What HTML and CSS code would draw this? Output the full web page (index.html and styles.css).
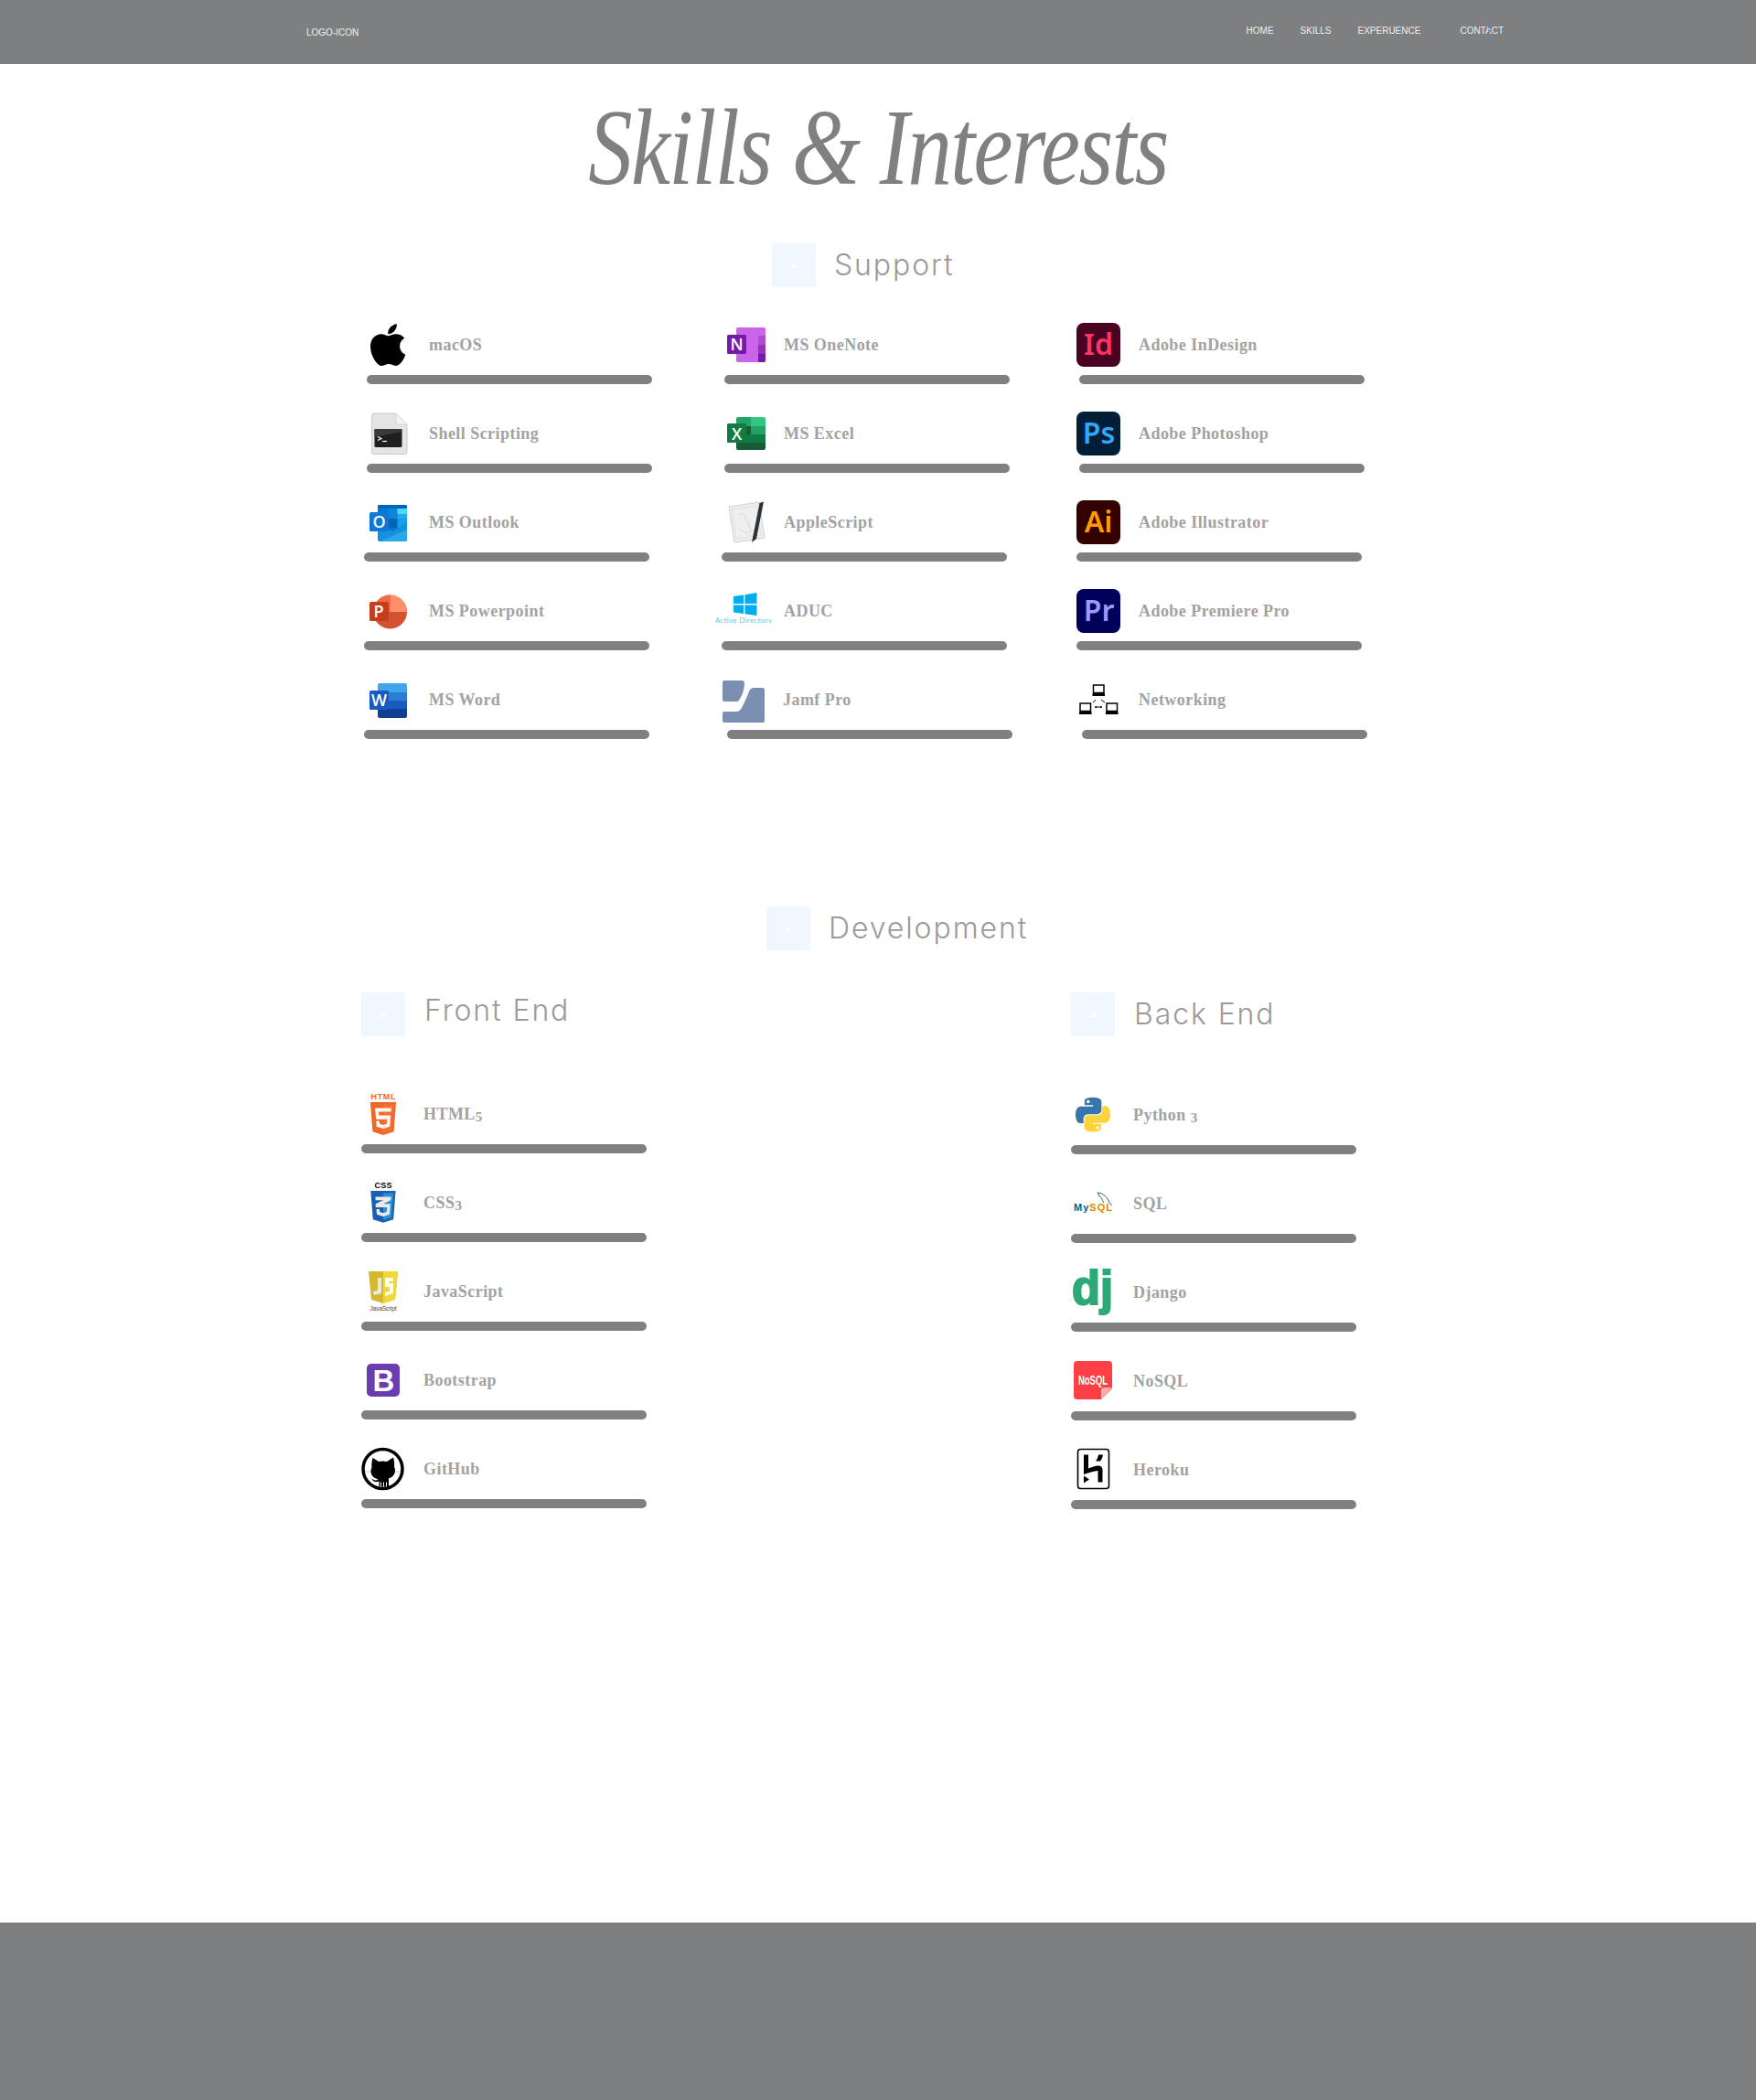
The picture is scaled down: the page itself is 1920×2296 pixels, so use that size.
FILE: index.html
```html
<!DOCTYPE html>
<html lang="en">
<head>
<meta charset="utf-8">
<title>Skills &amp; Interests</title>
<link rel="stylesheet" href="styles.css">
</head>
<body>
<nav class="topbar">
  <a class="logo">LOGO-ICON</a>
  <ul class="links">
    <li>HOME</li>
    <li>SKILLS</li>
    <li>EXPERUENCE</li>
    <li class="contact">CONTACT<span class="dots"><i></i><i></i><i></i></span></li>
  </ul>
</nav>
<main class="wrap">
  <h1 class="title">Skills &amp; Interests</h1>

  <h2 class="heading heading-support"><span class="ph"><i></i></span>Support</h2>
  <section class="support">
    <div class="col col-a">
      <div class="skill"><div class="head"><svg class="ic" viewBox="0 0 48 48"><path transform="translate(4.6 -2) scale(.102)" d="M318.7 268.7c-.2-36.7 16.4-64.4 50-84.8-18.8-26.9-47.2-41.7-84.7-44.6-35.5-2.8-74.3 20.7-88.5 20.7-15 0-49.4-19.7-76.4-19.7C63.3 141.2 4 184.8 4 273.5q0 39.3 14.4 81.2c12.8 36.7 59 126.7 107.2 125.2 25.2-.6 43-17.9 75.8-17.9 31.8 0 48.3 17.9 76.4 17.9 48.6-.7 90.4-82.5 102.6-119.3-65.2-30.7-61.7-90-61.7-91.9zm-56.6-164.2c27.3-32.4 24.8-61.9 24-72.5-24.1 1.4-52 16.4-67.9 34.9-17.5 19.8-27.8 44.3-25.6 71.9 26.1 2 49.9-11.4 69.5-34.3z"/></svg><span class="name">macOS</span></div><div class="bar in3"></div></div>

      <div class="skill"><div class="head"><svg class="ic" viewBox="0 0 48 48"><path d="M9 2h24l12 12v30a2.500 2.500 0 0 1-2.500 2.500H9A2.500 2.500 0 0 1 6.500 44V4.500A2.500 2.500 0 0 1 9 2z" fill="#e4e4e4" stroke="#c9c9c9"/><path d="M33 2v12h12z" fill="#f4f4f4" stroke="#cfcfcf" stroke-width=".7"/><rect x="9.500" y="19" width="30" height="20" rx="1.500" fill="#1f1f21"/><path d="M9.500 28 39.500 22v-3h-30z" fill="#3a3a3c"/><path d="M13 27.500l4 2-4 2" fill="none" stroke="#fff" stroke-width="1.200"/><path d="M18 32.500h5" stroke="#fff" stroke-width="1.200"/></svg><span class="name">Shell Scripting</span></div><div class="bar in3"></div></div>

      <div class="skill"><div class="head"><svg class="ic" viewBox="0 0 48 48"><rect x="13" y="5" width="32" height="30" rx="1.500" fill="#0078d4"/><path d="M15 5h28a2 2 0 0 1 2 2v2H13V7a2 2 0 0 1 2-2z" fill="#0364b8"/><rect x="24" y="9" width="10.500" height="11" fill="#0a88d8"/><rect x="34.500" y="9" width="10.500" height="11" fill="#28a8ea"/><rect x="34.500" y="9" width="10.500" height="6" fill="#50d9ff"/><rect x="24" y="20" width="10.500" height="10" fill="#0364b8"/><rect x="34.500" y="20" width="10.500" height="10" fill="#14a0e8"/><path d="M13 26l16 8 16-10v19a2 2 0 0 1-2 2H15a2 2 0 0 1-2-2z" fill="#1490df"/><path d="M15 45l30-13v11a2 2 0 0 1-2 2z" fill="#28a8ea"/><rect x="4" y="13" width="21" height="21" rx="1.500" fill="#0f78d4"/><text class="ms" x="14.500" y="30">O</text></svg><span class="name">MS Outlook</span></div><div class="bar"></div></div>

      <div class="skill"><div class="head"><svg class="ic" viewBox="0 0 48 48"><circle cx="26.500" cy="25" r="18.500" fill="#d35230"/><path d="M26.500 6.500a18.500 18.500 0 0 1 18.500 18.500H26.500z" fill="#ff8f6b"/><path d="M8 25a18.500 18.500 0 0 1 18.500-18.500V25z" fill="#ed6c47"/><rect x="4" y="14" width="21" height="21" rx="1.500" fill="#c43e1c"/><text class="ms" x="14" y="31">P</text></svg><span class="name">MS Powerpoint</span></div><div class="bar"></div></div>

      <div class="skill"><div class="head"><svg class="ic" viewBox="0 0 48 48"><path d="M15 6h28a2 2 0 0 1 2 2v9H13V8a2 2 0 0 1 2-2z" fill="#41a5ee"/><rect x="13" y="16" width="32" height="10" fill="#2b7cd3"/><rect x="13" y="25" width="32" height="10" fill="#185abd"/><path d="M13 34h32v8a2 2 0 0 1-2 2H15a2 2 0 0 1-2-2z" fill="#103f91"/><rect x="4" y="14" width="21" height="21" rx="1.500" fill="#185abd"/><text class="ms" x="14.500" y="31">W</text></svg><span class="name">MS Word</span></div><div class="bar"></div></div>
    </div>

    <div class="col col-b">
      <div class="skill"><div class="head"><svg class="ic" viewBox="0 0 48 48"><path d="M15 5h28a2 2 0 0 1 2 2v34a2 2 0 0 1-2 2H15a2 2 0 0 1-2-2V7a2 2 0 0 1 2-2z" fill="#ca64ea"/><rect x="37" y="14" width="8" height="10" fill="#ae4bd5"/><rect x="37" y="24" width="8" height="9.500" fill="#9332bf"/><path d="M37 33.500h8V41a2 2 0 0 1-2 2h-6z" fill="#7719aa"/><rect x="3" y="13" width="21" height="21" rx="1.500" fill="#7719aa"/><text class="ms" x="13.500" y="30">N</text></svg><span class="name">MS OneNote</span></div><div class="bar in3"></div></div>

      <div class="skill"><div class="head"><svg class="ic" viewBox="0 0 48 48"><path d="M15 6h16v10H13V8a2 2 0 0 1 2-2z" fill="#21a366"/><path d="M29 6h14a2 2 0 0 1 2 2v8H29z" fill="#33c481"/><rect x="13" y="16" width="16" height="9" fill="#185c37"/><rect x="29" y="16" width="16" height="9" fill="#21a366"/><rect x="13" y="25" width="16" height="9" fill="#107c41"/><rect x="29" y="25" width="16" height="9" fill="#107c41"/><path d="M13 34h32v6a2 2 0 0 1-2 2H15a2 2 0 0 1-2-2z" fill="#185c37"/><rect x="3" y="13" width="21" height="21" rx="1.500" fill="#107c41"/><text class="ms" x="13.500" y="30.500">X</text></svg><span class="name">MS Excel</span></div><div class="bar in3"></div></div>

      <div class="skill"><div class="head"><svg class="ic" viewBox="0 0 48 48"><path d="M5 7 38 2l6 39-33 5z" fill="#efefef" stroke="#d0d0d0"/><path d="M8 10 35 6l5 32-27 4z" fill="none" stroke="#dcdcdc" stroke-width=".8"/><path d="M16 16c3-3 7-1 7 2l5 12c2 4-2 7-6 5l-6-4" fill="none" stroke="#d8d8d8"/><path d="M43 1.500 38.500 3 30 46l5-4z" fill="#2d3338"/></svg><span class="name">AppleScript</span></div><div class="bar"></div></div>

      <div class="skill"><div class="head"><svg class="ic" viewBox="0 0 48 48"><path d="M10 8l11-1.500V16H10zM22.500 6.200 35.500 4V16h-13zM10 17.500h11V27L10 25.500zM22.500 17.500h13V29l-13-1.800z" fill="#00adef"/><text class="adir" x="-10" y="37" textLength="62">Active Directory</text></svg><span class="name">ADUC</span></div><div class="bar"></div></div>

      <div class="skill"><div class="head head-jamf"><svg class="ic" viewBox="0 0 48 48"><path d="M0 3H19a3 3 0 0 1 3 3c0 6-2 13-6 18.500-1 1-1 1.500-2 1.500H0a2 2 0 0 1-2-2V5a2 2 0 0 1 2-2z" fill="#7b8fb3"/><path d="M33 11H42a2 2 0 0 1 2 2V47a2 2 0 0 1-2 2H0a2 2 0 0 1-2-2V39a2 2 0 0 1 2-2H13c3 0 5-2 7-6 3-6 5-11 7-16 1-3 3-4 6-4z" fill="#7b8fb3"/></svg><span class="name">Jamf Pro</span></div><div class="bar in6"></div></div>
    </div>

    <div class="col col-c">
      <div class="skill"><div class="head"><svg class="ic" viewBox="0 0 48 48"><rect width="48" height="48" rx="8" fill="#49021f"/><text class="ad" x="24" y="35" fill="#ff3366">Id</text></svg><span class="name">Adobe InDesign</span></div><div class="bar in3"></div></div>
      <div class="skill"><div class="head"><svg class="ic" viewBox="0 0 48 48"><rect width="48" height="48" rx="8" fill="#001e36"/><text class="ad" x="24.500" y="35" fill="#31a8ff">Ps</text></svg><span class="name">Adobe Photoshop</span></div><div class="bar in3"></div></div>
      <div class="skill"><div class="head"><svg class="ic" viewBox="0 0 48 48"><rect width="48" height="48" rx="8" fill="#330000"/><text class="ad" x="24" y="35" fill="#ff9a00">Ai</text></svg><span class="name">Adobe Illustrator</span></div><div class="bar"></div></div>
      <div class="skill"><div class="head"><svg class="ic" viewBox="0 0 48 48"><rect width="48" height="48" rx="8" fill="#00005b"/><text class="ad" x="24.500" y="35" fill="#9999ff">Pr</text></svg><span class="name">Adobe Premiere Pro</span></div><div class="bar"></div></div>
      <div class="skill"><div class="head"><svg class="ic" viewBox="0 0 48 48"><rect x="18.500" y="8" width="11.500" height="8.500" fill="#fff" stroke="#000" stroke-width="1.500"/><rect x="17.500" y="17" width="13.500" height="3" fill="#000"/><rect x="4" y="28" width="11.500" height="8.500" fill="#fff" stroke="#000" stroke-width="1.500"/><rect x="3" y="37" width="13.500" height="3" fill="#000"/><rect x="33" y="28" width="11.500" height="8.500" fill="#fff" stroke="#000" stroke-width="1.500"/><rect x="32" y="37" width="13.500" height="3" fill="#000"/><path d="M18 27l3-3M27 24l4 3M20 32h8" stroke="#000" stroke-width="1" fill="none"/><path d="M20 32l2-1.300v2.600zM28 32l-2-1.300v2.600z"/></svg><span class="name">Networking</span></div><div class="bar in6"></div></div>
    </div>
  </section>

  <h2 class="heading heading-dev"><span class="ph"><i></i></span>Development</h2>

  <section class="dev">
    <div class="dev-col">
      <h3 class="subhead"><span class="ph"><i></i></span><span class="sub-front">Front End</span></h3>

      <div class="skill"><div class="head"><svg class="ic" viewBox="0 0 48 48"><text class="logo-word html-word" x="24" y="8" textLength="27">HTML</text><g transform="translate(8 11) scale(.0625 .0703)"><path d="M71 460 30 0h451l-41 460-185 52" fill="#f16529"/><path d="M256 472l149-41 35-394H256" fill="#f4702e"/><path d="M256 208h-75l-5-58h80V94H114l15 171h127zm0 147-64-17-4-45h-56l7 89 117 32z" fill="#fff"/><path d="M256 265h69l-7 73-62 17v59l115-32 16-174H256zm0-171v56h136l5-56z" fill="#f6f6f6"/></g></svg><span class="name">HTML<span class="old">5</span></span></div><div class="bar"></div></div>

      <div class="skill"><div class="head"><svg class="ic" viewBox="0 0 48 48"><text class="logo-word css-word" x="24" y="8" textLength="19">CSS</text><g transform="translate(8.500 11) scale(.0605 .068)"><path d="M71 460 30 0h451l-41 460-185 52" fill="#1b60b0"/><path d="M256 472l149-41 35-394H256" fill="#2b8fd4"/><path d="M114 94h284l-5 56-137 58h131l-15 172-115 32-116-32-8-86h56l4 44 64 17 62-17 7-73H122l-5-56 139-58H119z" fill="#ebebeb"/></g></svg><span class="name">CSS<span class="old">3</span></span></div><div class="bar"></div></div>

      <div class="skill"><div class="head"><svg class="ic" viewBox="0 0 48 48"><path d="M8 2h32l-3 31-13 4-13-4z" fill="#d4b830"/><path d="M24 2h16l-3 31-13 4z" fill="#f0d83b"/><path d="M22 9v17l-8 2-1-4 5-1V9z" fill="#e8e8e8"/><path d="M35 9H26v10h5v5l-5 1v4l9-3V15h-5v-2h5z" fill="#fff"/><text class="js-word" x="24" y="45" textLength="29">JavaScript</text></svg><span class="name">JavaScript</span></div><div class="bar"></div></div>

      <div class="skill"><div class="head"><svg class="ic" viewBox="0 0 48 48"><rect x="6" y="6" width="36" height="36" rx="5" fill="#6a3cb0"/><text class="boot" x="24.500" y="35.500">B</text></svg><span class="name">Bootstrap</span></div><div class="bar"></div></div>

      <div class="skill"><div class="head"><svg class="ic" viewBox="0 0 48 48"><circle cx="23.500" cy="24" r="21.500" fill="#fff" stroke="#000" stroke-width="3.500"/><path d="M4 27h39" stroke="#aaa" stroke-width=".6"/><path transform="translate(0 2.500)" d="M12 9l7 4.500c3-.8 6-.8 9 0L35 9c1 3 1.500 7 1 10 1 2 1.200 4 .8 6-.8 4-4 6-6.800 7v9h-2v-5h-1v5h-2v-5h-1v5h-2v-5h-1v5h-1.500v-6c-2 1-4 1-6 0l-2.500-3 3 1.500c2 1 3 .5 4.500-.5-3-1-7-3-7.800-7-.4-2-.2-4 .8-6-.5-3 0-7 1-10z"/></svg><span class="name">GitHub</span></div><div class="bar"></div></div>
    </div>

    <div class="dev-col dev-col-back">
      <h3 class="subhead"><span class="ph"><i></i></span><span class="sub-back">Back End</span></h3>

      <div class="skill"><div class="head"><svg class="ic" viewBox="0 0 48 48"><g transform="translate(5 4.500) scale(.345)"><path d="M54.900.9C26.900.9 28.600 13 28.600 13v12.600h26.700v3.800H18S0 27.300 0 55.600c0 28.300 15.700 27.300 15.700 27.300h9.400V69.700s-.5-15.700 15.500-15.700h26.600s15 .2 15-14.500V15.300S84.500.9 54.900.9zM40 9.400c2.700 0 4.800 2.200 4.800 4.800 0 2.700-2.200 4.800-4.800 4.800-2.700 0-4.800-2.200-4.800-4.800 0-2.700 2.200-4.800 4.800-4.800z" fill="#3776ab"/><path transform="rotate(180 55 55.500)" d="M54.900.9C26.900.9 28.600 13 28.600 13v12.600h26.700v3.800H18S0 27.300 0 55.600c0 28.300 15.700 27.300 15.700 27.300h9.400V69.700s-.5-15.700 15.500-15.700h26.600s15 .2 15-14.500V15.300S84.500.9 54.900.9zM40 9.400c2.700 0 4.800 2.200 4.800 4.800 0 2.700-2.200 4.800-4.800 4.800-2.700 0-4.800-2.200-4.800-4.800 0-2.700 2.200-4.800 4.800-4.800z" fill="#ffd43b"/></g></svg><span class="name">Python <span class="old">3</span></span></div><div class="bar"></div></div>

      <div class="skill"><div class="head"><svg class="ic" viewBox="0 0 48 48"><text class="my" x="3" y="32" textLength="42"><tspan class="my-a">My</tspan><tspan class="my-b">SQL</tspan></text><path d="M29 12c6 0 11 5 13 11l3 3M29 12l2 4c2 0 3 4 5 7" fill="none" stroke="#2f5d72" stroke-width="1"/></svg><span class="name">SQL</span></div><div class="bar"></div></div>

      <div class="skill"><div class="head"><svg class="ic" viewBox="0 0 48 48"><text class="dj" x="1" y="37" textLength="45" lengthAdjust="spacingAndGlyphs">dj</text></svg><span class="name">Django</span></div><div class="bar"></div></div>

      <div class="skill"><div class="head"><svg class="ic" viewBox="0 0 48 48"><path d="M7 2h34a4 4 0 0 1 4 4v26L33 44H7a4 4 0 0 1-4-4V6a4 4 0 0 1 4-4z" fill="#fb3f44"/><path d="M33 44l12-13H36a3 3 0 0 0-3 3z" fill="#fdaaaa"/><text class="nosql" x="24" y="28" textLength="32" lengthAdjust="spacingAndGlyphs">NoSQL</text></svg><span class="name">NoSQL</span></div><div class="bar"></div></div>

      <div class="skill"><div class="head"><svg class="ic" viewBox="0 0 48 48"><rect x="7.500" y="1.500" width="34" height="43" rx="3" fill="#fff" stroke="#000" stroke-width="1.600"/><path d="M14 7.500h5v15c3-1.500 8-3 11-3 3 0 4.500 1.500 4.500 4.500V37.500h-5V25c-4 .3-11 2.500-15.500 4z"/><path d="M14 30.500l6 4-6 4zM30 7.500h5c-.5 3-1.500 5-3 7h-5c1.500-2 2.500-4 3-7z"/></svg><span class="name">Heroku</span></div><div class="bar"></div></div>
    </div>
  </section>
</main>
<footer class="footer"></footer>
</body>
</html>
```
FILE: styles.css
```css
* { box-sizing: border-box; }
html, body { margin: 0; padding: 0; }
body { background: #fff; font-family: "Liberation Sans", Arial, sans-serif; }

.topbar {
  height: 70px;
  background: #7e7f81;
  display: flex;
  justify-content: space-between;
  padding: 0 276px 0 335px;
  color: #f0f0f0;
  font-size: 10px;
}
.logo { margin-top: 30px; line-height: 12px; }
.links { display: flex; list-style: none; margin: 0; padding: 0; gap: 29px; line-height: 12px; padding-top: 28px; }
.contact { position: relative; margin-left: 14px; }
.dots { position: absolute; left: 31px; top: 0; width: 3px; height: 16px; display: flex; flex-direction: column; gap: 2px; }
.dots i { display: block; width: 3px; height: 3px; border-radius: 50%; background: #2f8fe8; }
.dots i:last-child { margin-top: 4px; }

.wrap { width: 1130px; margin: 0 auto; display: block; height: 2032px; }

.title {
  margin: 0 0 0 -390px;
  width: 1910px;
  height: 196px;
  padding-top: 33px;
  text-align: center;
  font-family: "Liberation Serif", serif;
  font-style: italic;
  font-weight: 400;
  font-size: 118px;
  line-height: 118px;
  letter-spacing: -2px;
  color: #808080;
  transform: scaleX(.82);
}

.heading, .subhead {
  display: flex;
  align-items: center;
  margin: 0;
  font-family: Inter, sans-serif;
  font-weight: 300;
  font-size: 32px;
  line-height: 48px;
  letter-spacing: 1.9px;
  color: #9a9a9a;
  gap: 20px;
}
.heading-support { margin-left: 449px; }
.heading-dev { margin-left: 443px; margin-top: 183px; }
.ph { width: 48px; height: 48px; background: #f0f7ff; display: flex; align-items: center; justify-content: center; flex: none; }
.ph i { width: 0; height: 0; border-left: 4px solid transparent; border-right: 4px solid transparent; border-bottom: 5px solid #fff; }

.support { display: flex; margin-top: 39px; margin-left: 3px; }
.col { display: flex; flex-direction: column; gap: 30px; }
.col-a { width: 391px; }
.col-b { width: 388px; }

.skill { display: block; }
.head { display: flex; align-items: center; height: 48px; gap: 20px; margin-bottom: 9px; }
.col-a .head { padding-left: 2px; gap: 21px; }
.col-b .head { padding-left: 3px; gap: 17px; }
.col-b .head-jamf { gap: 16px; }
.ic { width: 48px; height: 48px; flex: none; overflow: visible; display: block; }
.name {
  font-family: "Liberation Serif", serif;
  font-weight: 700;
  font-size: 18px;
  letter-spacing: .45px;
  color: #a2a2a2;
}
.old { font-size: 15px; position: relative; top: 2px; }
.bar { width: 312px; height: 10px; border-radius: 5px; background: #808080; }
.in3 { margin-left: 3px; }
.in6 { margin-left: 6px; }

.dev { display: grid; grid-template-columns: 776px 312px; margin-top: 46px; }
.dev-col { display: flex; flex-direction: column; gap: 30px; }
.dev-col-back .subhead + .skill { margin-top: 1px; }
.subhead { align-items: flex-start; gap: 21px; margin-bottom: 31px; }
.sub-front { position: relative; top: -4px; }
.sub-back { position: relative; }

.footer { height: 194px; background: #7e7f81; }

.ms { font-family: "Open Sans", sans-serif; font-weight: 600; font-size: 18px; fill: #fff; text-anchor: middle; }
.ad { font-family: "Noto Sans", sans-serif; font-weight: 600; font-size: 32px; text-anchor: middle; }
.adir { font-family: Lato, sans-serif; font-size: 8px; fill: #5cc8f2; }
.logo-word { font-family: "Liberation Sans", sans-serif; font-weight: 700; font-size: 9px; text-anchor: middle; }
.html-word { fill: #f1662a; }
.css-word { fill: #000; }
.js-word { font-family: "Liberation Sans", sans-serif; font-size: 6.500px; fill: #444; text-anchor: middle; }
.boot { font-family: "Liberation Sans", sans-serif; font-weight: 700; font-size: 33px; fill: #fff; text-anchor: middle; }
.my { font-family: "Liberation Sans", sans-serif; font-weight: 700; font-size: 11px; }
.my-a { fill: #00618a; }
.my-b { fill: #d98b00; }
.dj { font-family: "Liberation Sans", sans-serif; font-weight: 700; font-size: 51px; fill: #2ba977; stroke: #2ba977; stroke-width: 2px; }
.nosql { font-family: "Liberation Sans", sans-serif; font-weight: 700; font-size: 14px; fill: #fff; text-anchor: middle; }
```
